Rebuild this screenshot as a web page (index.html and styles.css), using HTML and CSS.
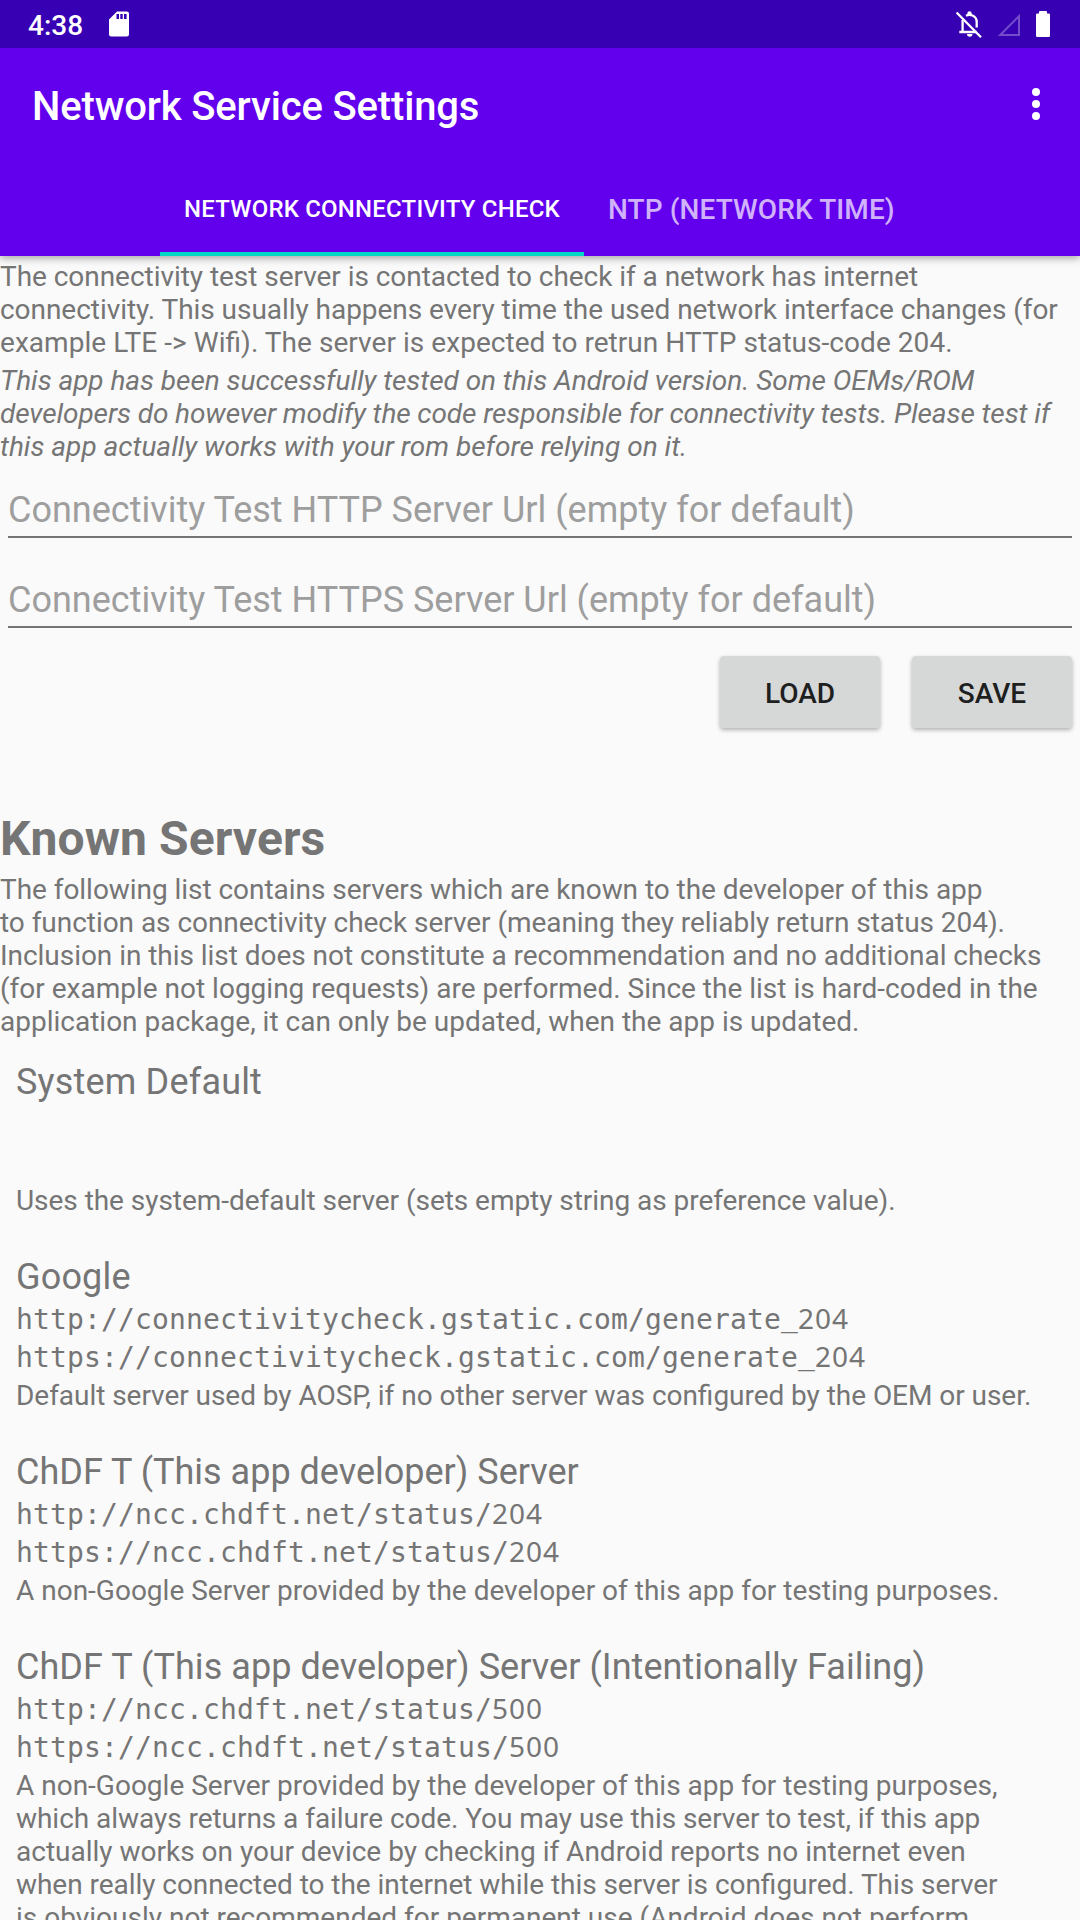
FILE: index.html
```html
<!DOCTYPE html>
<html lang="en">
<head>
<meta charset="utf-8">
<title>Network Service Settings</title>
<link rel="stylesheet" href="styles.css">
</head>
<body>
<header class="appbar">
  <div class="status">
    <span class="clock">4:38</span>
    <svg class="sd" width="20" height="26" viewBox="0 0 20 26"><path fill="#fff" fill-rule="evenodd" d="M8 .5H17.8A2.2 2.2 0 0 1 20 2.7V23.3A2.2 2.2 0 0 1 17.8 25.5H2.2A2.2 2.2 0 0 1 0 23.3V8.5ZM7.5 3V8H10V3ZM11.3 3V8H13.7V3ZM15 3V8H17.6V3Z"/></svg>
    <svg class="bell" width="28" height="28" viewBox="0 0 28 28" fill="none" stroke="#fff"><path stroke-width="2.3" d="M7.6 10V21.8M4.300 22H21.500M11 5.800Q14 4.200 17.500 5.500C20.500 6.800 21.700 9.200 21.700 12V17.500"/><path fill="#fff" stroke="none" d="M12.300 4.500V3.500a2.200 2.200 0 0 1 4.400 0V5.500ZM12 24H17.500A2.750 2.750 0 0 1 12 24Z"/><path stroke-width="2.300" d="M1.600 2.500 26 27.200"/></svg>
    <svg class="signal" width="22" height="22" viewBox="0 0 22 22"><path fill="none" stroke="#fff" stroke-opacity=".3" stroke-width="2" d="M21 2.200V21H2.200Z"/></svg>
    <svg class="battery" width="14" height="26" viewBox="0 0 14 26"><path fill="#fff" d="M4 0H10Q11 0 11 1V2.500H12.800Q14 2.500 14 3.700V24.800Q14 26 12.800 26H1.200Q0 26 0 24.800V3.700Q0 2.500 1.200 2.500H3V1Q3 0 4 0Z"/></svg>
  </div>
  <div class="toolbar">
    <h1 class="title">Network Service Settings</h1>
    <svg class="more" width="8" height="32" viewBox="0 0 8 32" fill="#fff"><circle cx="4" cy="4" r="4"/><circle cx="4" cy="16" r="4"/><circle cx="4" cy="28" r="4"/></svg>
  </div>
  <nav class="tabs">
    <div class="tab tab-active">NETWORK CONNECTIVITY CHECK</div>
    <div class="tab">NTP (NETWORK TIME)</div>
  </nav>
</header>
<main class="content">
  <p class="text"><span class="snug">The connectivity test server is contacted to check if a network has internet<br>connectivity. This usually happens every time the used network interface changes (for</span><br><span class="loose">example LTE -&gt; Wi<span class="lig">fi</span>). The server is expected to retrun HTTP status-code 204.</span></p>
  <p class="text note"><span class="snug">This app has been successfully tested on this Android version. Some OEMs/ROM</span><br><span class="tight">developers do however modify the code responsible for connectivity tests. Please test if</span><br>this app actually works with your rom before relying on it.</p>
  <div class="fields">
    <div class="field">Connectivity Test HTTP Server Url (empty for default)</div>
    <div class="field">Connectivity Test HTTPS Server Url (empty for default)</div>
  </div>
  <div class="actions">
    <button class="btn">LOAD</button>
    <button class="btn">SAVE</button>
  </div>
  <h2 class="heading">Known Servers</h2>
  <p class="text"><span class="snug">The following list contains servers which are known to the developer of this app<br>to function as connectivity check server (meaning they reliably return status 204).<br>Inclusion in this list does not constitute a recommendation and no additional checks</span><br>(for example not logging requests) are performed. Since the list is hard-coded in the<br>application package, it can only be updated, when the app is updated.</p>
  <section class="servers">
    <article class="server">
      <h3 class="name wide">System Default</h3>
      <p class="url"></p>
      <p class="url"></p>
      <p class="text snug">Uses the system-default server (sets empty string as preference value).</p>
    </article>
    <article class="server">
      <h3 class="name wide">Google</h3>
      <p class="url">http://connectivitycheck.gstatic.com/generate<span class="rule">_</span><span class="num">204</span></p>
      <p class="url">https://connectivitycheck.gstatic.com/generate<span class="rule">_</span><span class="num">204</span></p>
      <p class="text snug">Default server used by AOSP, if no other server was con<span class="lig">fi</span>gured by the OEM or user.</p>
    </article>
    <article class="server">
      <h3 class="name">ChDF T (This app developer) Server</h3>
      <p class="url">http://ncc.chdft.net/status/<span class="num">204</span></p>
      <p class="url">https://ncc.chdft.net/status/<span class="num">204</span></p>
      <p class="text">A non-Google Server provided by the developer of this app for testing purposes.</p>
    </article>
    <article class="server">
      <h3 class="name loose">ChDF T (This app developer) Server (Intentionally Failing)</h3>
      <p class="url">http://ncc.chdft.net/status/<span class="num">500</span></p>
      <p class="url">https://ncc.chdft.net/status/<span class="num">500</span></p>
      <p class="text">A non-Google Server provided by the developer of this app for testing purposes,<br><span class="snug">which always returns a failure code. You may use this server to test, if this app</span><br>actually works on your device by checking if Android reports no internet even<br><span class="snug">when really connected to the internet while this server is con<span class="lig">fi</span>gured. This server</span><br>is obviously not recommended for permanent use (Android does not perform</p>
    </article>
  </section>
</main>
</body>
</html>
```
FILE: styles.css
```css
* { box-sizing: border-box; margin: 0; padding: 0; }
body {
  display: flex;
  flex-direction: column;
  width: 1080px;
  height: 1920px;
  overflow: hidden;
  background: #fafafa;
  color: #757575;
  font-family: Roboto, sans-serif;
  white-space: nowrap;
}
.appbar {
  flex: none;
  height: 256px;
  background: #6200ee;
  color: #fff;
  box-shadow: 0 2px 8px rgba(0, 0, 0, .36);
}
.status {
  display: flex;
  align-items: flex-start;
  height: 48px;
  padding: 0 30px 0 28px;
  background: #3700b3;
}
.clock { width: 81px; padding-top: 9px; font-size: 28px; font-weight: 500; line-height: 33px; }
.sd { margin-top: 11px; }
.bell { margin: 10px 15px 0 auto; }
.signal { margin: 14px 16px 0 0; }
.battery { margin-top: 11px; }
.toolbar {
  display: flex;
  align-items: center;
  justify-content: space-between;
  height: 112px;
  padding: 0 40px 0 32px;
}
.title { padding-top: 5px; font-size: 40px; font-weight: 500; line-height: 47px; letter-spacing: -.15px; }
.tabs { display: flex; height: 96px; padding-left: 160px; }
.tab {
  display: flex;
  align-items: center;
  justify-content: center;
  padding: 3px 24px 0;
  color: #d0b2fa;
  font-size: 28px;
  font-weight: 500;
  line-height: 33px;
  letter-spacing: .1px;
}
.tab-active {
  width: 424px;
  border-bottom: 4px solid #03dac5;
  padding-top: 6px;
  color: #fff;
  font-size: 24px;
  letter-spacing: .2px;
}
.content { padding-top: 4px; }
.text { font-size: 28px; line-height: 33px; }
.note { margin-top: 5px; font-style: italic; }
.tight { letter-spacing: -.095px; }
.snug { letter-spacing: -.045px; }
.loose { letter-spacing: .05px; }
.wide { letter-spacing: .18px; }
.lig { letter-spacing: 0; }
.fields { display: grid; gap: 41px; padding: 26px 8px 0; }
.field {
  height: 49px;
  border-bottom: 2px solid #757575;
  color: #9e9e9e;
  font-size: 36px;
  line-height: 42px;
}
.actions { display: flex; justify-content: flex-end; gap: 32px; padding: 28px 8px 0; }
.btn {
  width: 160px;
  height: 72px;
  padding-top: 2px;
  border: 0;
  border-radius: 4px;
  background: #d6d7d7;
  color: #1e1f1f;
  font: 500 28px/33px Roboto, sans-serif;
  box-shadow: 0 2px 4px rgba(0, 0, 0, .3);
}
.heading { margin: 82px 0 6px; font-size: 48px; font-weight: 700; line-height: 57px; letter-spacing: .1px; }
.servers { display: grid; gap: 39px; padding: 23px 16px 0; }
.server { display: grid; gap: 5px; }
.name { font-size: 36px; font-weight: 400; line-height: 42px; }
.url {
  height: 33px;
  font-family: "DejaVu Sans Mono", monospace;
  font-size: 28px;
  line-height: 33px;
  letter-spacing: .14px;
}
.num { font-family: "Noto Sans", sans-serif; line-height: 0; letter-spacing: .98px; }
.rule { line-height: 0; vertical-align: 3px; }
```
